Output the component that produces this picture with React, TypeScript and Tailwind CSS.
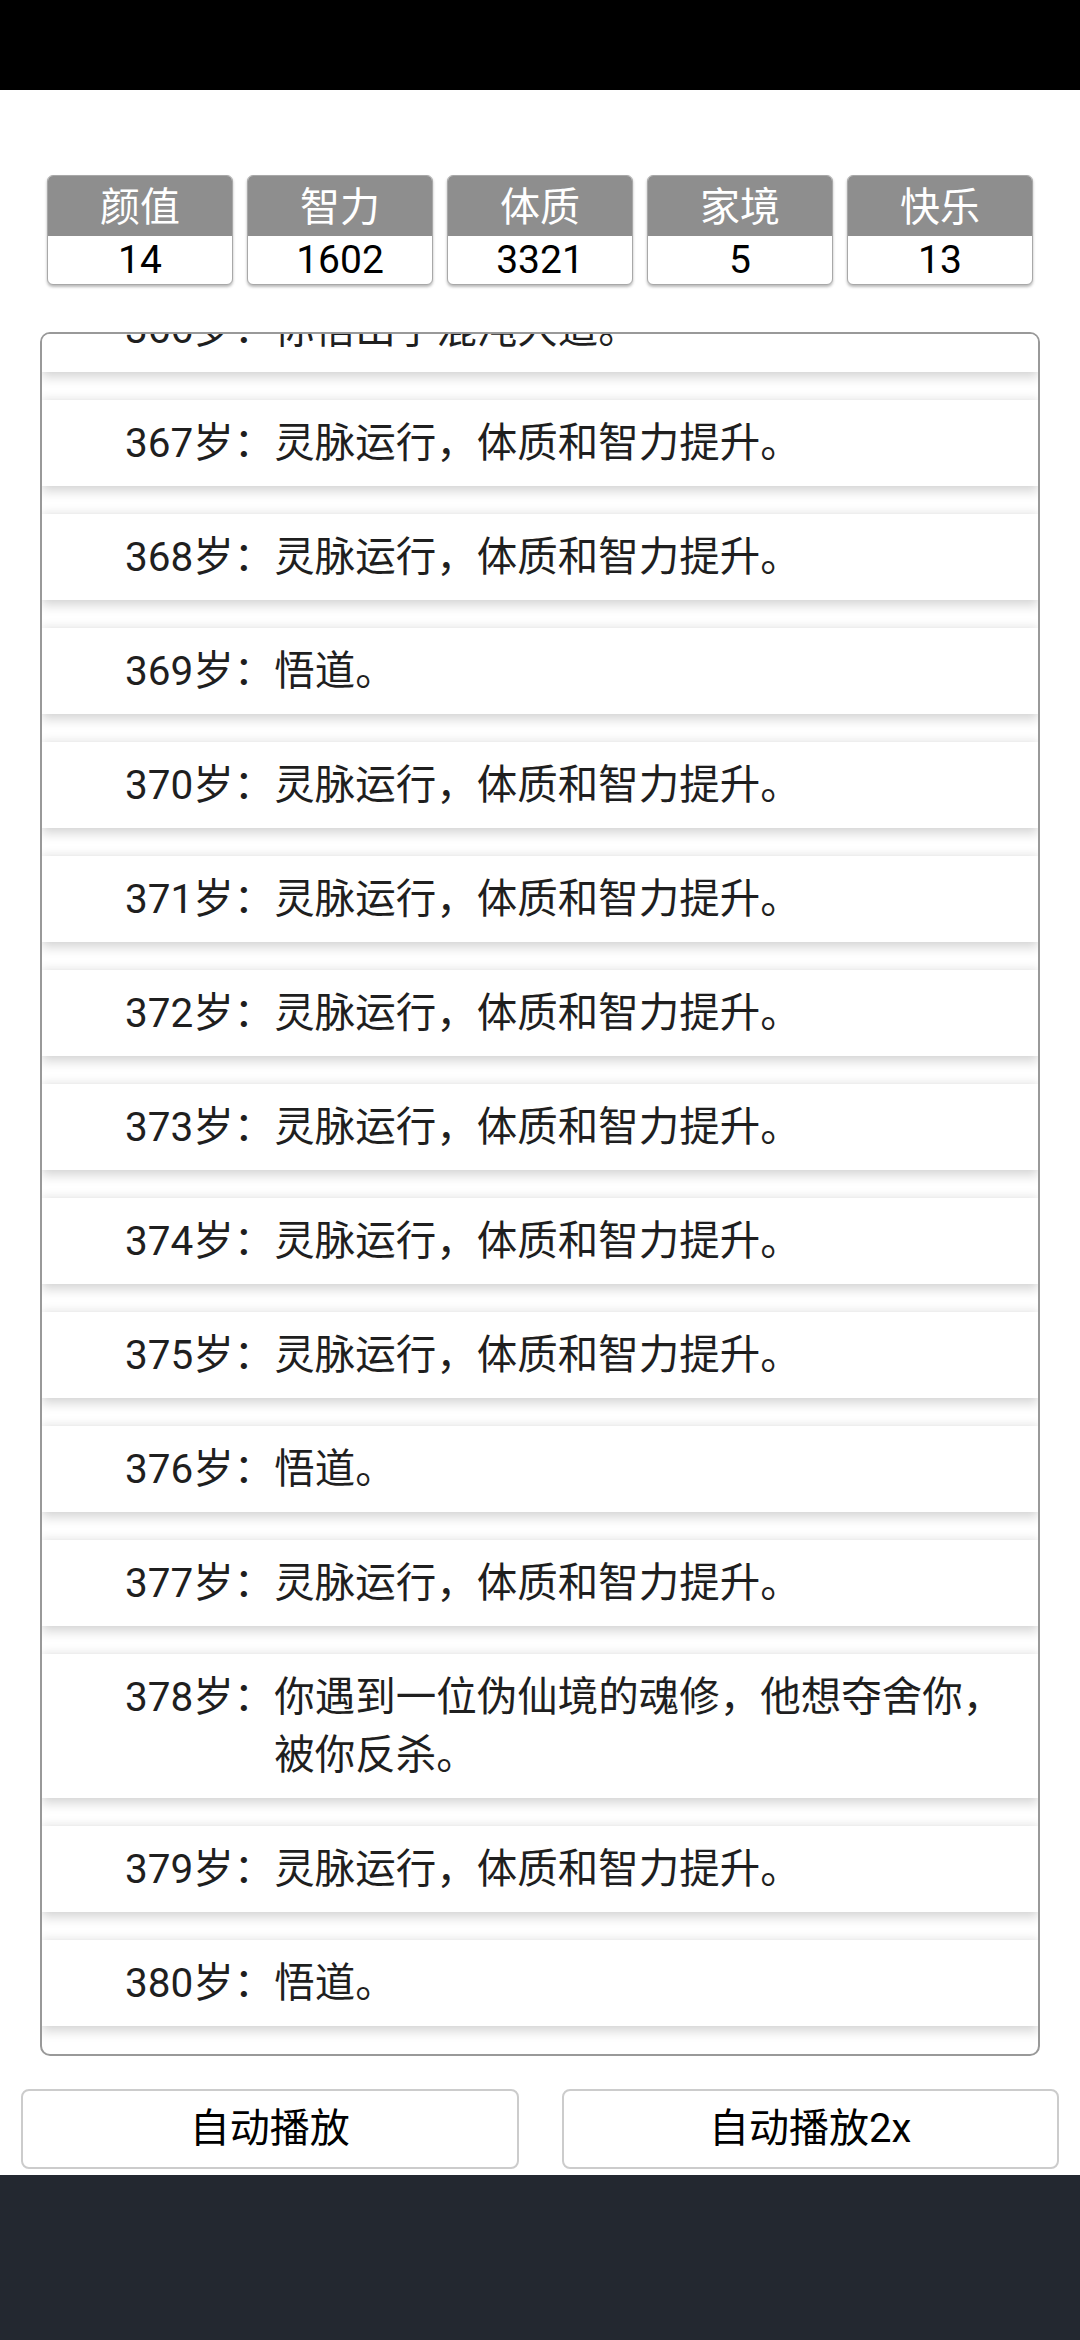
import React from "react";

const stats = [
  { label: "颜值", value: "14" },
  { label: "智力", value: "1602" },
  { label: "体质", value: "3321" },
  { label: "家境", value: "5" },
  { label: "快乐", value: "13" },
];

const grow = "灵脉运行，体质和智力提升。";

const events: { age: number; text: string }[] = [
  { age: 366, text: "你悟出了混沌大道。" },
  { age: 367, text: grow },
  { age: 368, text: grow },
  { age: 369, text: "悟道。" },
  { age: 370, text: grow },
  { age: 371, text: grow },
  { age: 372, text: grow },
  { age: 373, text: grow },
  { age: 374, text: grow },
  { age: 375, text: grow },
  { age: 376, text: "悟道。" },
  { age: 377, text: grow },
  { age: 378, text: "你遇到一位伪仙境的魂修，他想夺舍你，被你反杀。" },
  { age: 379, text: grow },
  { age: 380, text: "悟道。" },
];

function StatBox({ label, value }: { label: string; value: string }) {
  return (
    <div className="flex h-[110px] w-[186px] flex-col overflow-hidden rounded-[6px] border border-[#a8a8a8] bg-white shadow-[0_2px_3px_rgba(0,0,0,0.28)]">
      <div className="flex h-[60px] items-center justify-center bg-[#8e8e8e] pt-[4px] text-[40px] leading-[56px] text-white">
        {label}
      </div>
      <div className="flex flex-1 items-center justify-center text-[39px] leading-[48px] text-black">{value}</div>
    </div>
  );
}

export default function App() {
  return (
    <div className="flex min-h-[2340px] w-[1080px] flex-col bg-white font-['Roboto','Noto_Sans_CJK_SC',sans-serif]">
      <div className="h-[90px] bg-black" />

      <div className="flex justify-center gap-[14px] pt-[85px]">
        {stats.map((s) => (
          <StatBox key={s.label} label={s.label} value={s.value} />
        ))}
      </div>

      <div className="mx-[40px] mt-[47px] flex h-[1724px] flex-col justify-end gap-[28px] overflow-hidden rounded-[10px] border-2 border-[#999] bg-white pb-[28px]">
        {events.map((e) => (
          <div
            key={e.age}
            className="flex shrink-0 bg-white py-[14px] pl-[83px] pr-[30px] text-[40.5px] leading-[58px] text-[#1f1f1f] shadow-[0_6px_10px_rgba(0,0,0,0.15),0_-3px_8px_rgba(0,0,0,0.07)]"
          >
            <span className="shrink-0">{e.age}岁：</span>
            <span>{e.text}</span>
          </div>
        ))}
      </div>

      <div className="mt-[33px] flex gap-[43px] px-[21px]">
        <button type="button" className="flex h-[80px] flex-1 items-center justify-center rounded-[8px] border-2 border-[#ccc] bg-white text-[40px] text-black">
          自动播放
        </button>
        <button type="button" className="flex h-[80px] flex-1 items-center justify-center rounded-[8px] border-2 border-[#ccc] bg-white text-[40px] text-black">
          自动播放2x
        </button>
      </div>

      <div className="mt-[6px] flex-1 bg-[#232830]" />
    </div>
  );
}
